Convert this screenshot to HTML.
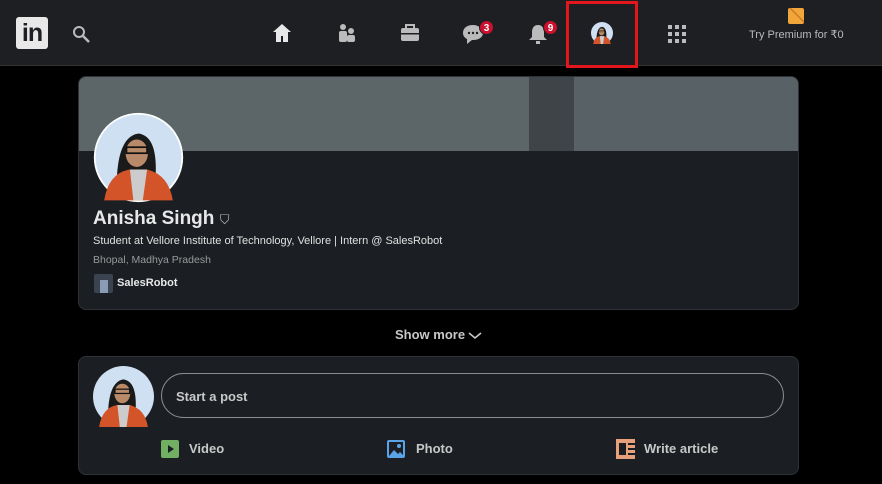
<!DOCTYPE html>
<html><head><style>
*{margin:0;padding:0;box-sizing:border-box}
body{width:882px;height:484px;background:#000;font-family:"Liberation Sans",sans-serif;position:relative;overflow:hidden;color:#e8e8e8}
.nav{position:absolute;left:0;top:0;width:882px;height:66px;background:#1d1f23;border-bottom:1px solid #333}
.ab{position:absolute}
.card{position:absolute;left:78px;background:#1b1f23;border-radius:8px;border:1px solid #2e3236;overflow:hidden}
.badge{position:absolute;background:#cb112d;color:#fff;font-size:10px;font-weight:bold;width:15px;height:15px;border-radius:50%;text-align:center;line-height:15px;border:1px solid #1d1f23}
</style></head><body>
<svg width="0" height="0" style="position:absolute"><defs>
<g id="av"><circle cx="50" cy="50" r="50" fill="#cfe0f2"/><path d="M25 70 Q28 25 50 22 Q72 25 70 70 Z" fill="#1a1a1a"/><ellipse cx="48" cy="45" rx="13" ry="16" fill="#b98a6a"/><rect x="36" y="38" width="24" height="7" fill="none" stroke="#111" stroke-width="2"/><path d="M10 100 Q15 68 40 64 L60 64 Q85 70 90 100 Z" fill="#d4542a"/><path d="M40 64 L60 64 L55 100 L44 100Z" fill="#ccc"/></g>
</defs></svg>
<div class="nav">
 <div class="ab" style="left:16px;top:17px;width:32px;height:32px;background:#e8e8e8;border-radius:3px;color:#1d1f23;font-weight:bold;font-size:25px;line-height:33px;text-align:center;letter-spacing:-1px">in</div>
 <svg class="ab" style="left:72px;top:25px" width="18" height="18"><circle cx="7" cy="7" r="5" fill="none" stroke="#bbb" stroke-width="2"/><path d="M11 11l6 6" stroke="#bbb" stroke-width="2.5"/></svg>
 <svg class="ab" style="left:272px;top:23px" width="20" height="20"><path d="M10 1L1 9h3v10h5v-6h2v6h5V9h3z" fill="#e8e8e8"/></svg>
 <svg class="ab" style="left:337px;top:23px" width="20" height="20"><circle cx="6" cy="4" r="3" fill="#bbb"/><rect x="2" y="8" width="8" height="11" rx="2" fill="#bbb"/><circle cx="14" cy="8" r="3" fill="#bbb"/><rect x="10" y="12" width="8" height="7" rx="2" fill="#bbb"/></svg>
 <svg class="ab" style="left:400px;top:23px" width="20" height="20"><rect x="6" y="2" width="8" height="4" fill="none" stroke="#bbb" stroke-width="2"/><rect x="1" y="5" width="18" height="13" rx="2" fill="#bbb"/><rect x="1" y="10" width="18" height="1.5" fill="#1d1f23"/></svg>
 <svg class="ab" style="left:462px;top:23px" width="22" height="22"><path d="M11 2C5 2 1 5 1 10c0 3 2 5 4 6v5l5-4h1c6 0 10-3 10-7s-4-8-10-8z" fill="#bbb"/><circle cx="7" cy="10" r="1.2" fill="#1d1f23"/><circle cx="11" cy="10" r="1.2" fill="#1d1f23"/><circle cx="15" cy="10" r="1.2" fill="#1d1f23"/></svg>
 <div class="badge" style="left:479px;top:20px">3</div>
 <svg class="ab" style="left:527px;top:23px" width="22" height="22"><path d="M11 2c-4 0-6 3-6 7v5l-3 3h18l-3-3V9c0-4-2-7-6-7z" fill="#bbb"/><rect x="9" y="18" width="4" height="3" fill="#bbb"/></svg>
 <div class="badge" style="left:543px;top:20px">9</div>
 <div class="ab" style="left:566px;top:1px;width:72px;height:67px;border:3px solid #e3161b"></div>
 <svg class="ab" style="left:591px;top:22px" width="22" height="22" viewBox="0 0 100 100"><use href="#av"/></svg>
 <svg class="ab" style="left:668px;top:25px" width="18" height="18"><g fill="#bbb"><rect x="0" y="0" width="4" height="4"/><rect x="7" y="0" width="4" height="4"/><rect x="14" y="0" width="4" height="4"/><rect x="0" y="7" width="4" height="4"/><rect x="7" y="7" width="4" height="4"/><rect x="14" y="7" width="4" height="4"/><rect x="0" y="14" width="4" height="4"/><rect x="7" y="14" width="4" height="4"/><rect x="14" y="14" width="4" height="4"/></g></svg>
 <svg class="ab" style="left:788px;top:8px" width="16" height="16"><rect width="16" height="16" rx="2" fill="#f1a63a"/><path d="M2 0L16 14" stroke="#c9782a" stroke-width="1.5"/></svg>
 <div class="ab" style="left:749px;top:28px;font-size:11px;color:#bbb">Try Premium for ₹0</div>
</div>

<div class="card" style="top:76px;width:721px;height:234px">
 <div class="ab" style="left:0;top:0;width:721px;height:74px;background:#5c6669"></div>
 <div class="ab" style="left:450px;top:0;width:45px;height:74px;background:#3e4448"></div>
 <div class="ab" style="left:495px;top:0;width:226px;height:74px;background:#586165"></div>
 <svg class="ab" style="left:14px;top:35px" width="91" height="91" viewBox="-3 -3 106 106"><circle cx="50" cy="50" r="52" fill="#fff"/><use href="#av"/></svg>
 <div class="ab" style="left:14px;top:131px;font-size:19px;font-weight:bold;color:#e8e8e8">Anisha Singh <span style="font-size:13px;font-weight:normal;color:#bbb">⛉</span></div>
 <div class="ab" style="left:14px;top:158px;font-size:11px;color:#e0e0e0">Student at Vellore Institute of Technology, Vellore | Intern @ SalesRobot</div>
 <div class="ab" style="left:14px;top:177px;font-size:10.5px;color:#999">Bhopal, Madhya Pradesh</div>
 <div class="ab" style="left:15px;top:197px;width:19px;height:19px;background:#3b4250;border-radius:2px"><div style="position:absolute;left:6px;top:6px;width:8px;height:13px;background:#8a9bb5"></div></div>
 <div class="ab" style="left:38px;top:200px;font-size:11px;font-weight:bold;color:#e8e8e8">SalesRobot</div>
</div>

<div class="ab" style="left:395px;top:327px;font-size:13px;font-weight:bold;color:#c8c8c8">Show more</div>
<svg class="ab" style="left:468px;top:330px" width="14" height="10"><path d="M1 3l6 5 6-5" fill="none" stroke="#c8c8c8" stroke-width="1.6"/></svg>

<div class="card" style="top:356px;width:721px;height:119px">
 <svg class="ab" style="left:14px;top:9px" width="61" height="61" viewBox="0 0 100 100"><use href="#av"/></svg>
 <div class="ab" style="left:82px;top:16px;width:623px;height:45px;border:1px solid #8a8d90;border-radius:23px"></div>
 <div class="ab" style="left:97px;top:32px;font-size:13px;font-weight:bold;color:#c8c8c8">Start a post</div>
 <svg class="ab" style="left:82px;top:83px" width="18" height="18"><rect width="18" height="18" rx="2" fill="#71b062"/><path d="M7 5l6 4-6 4z" fill="#1b1f23"/></svg>
 <div class="ab" style="left:110px;top:84px;font-size:13px;font-weight:bold;color:#c8c8c8">Video</div>
 <svg class="ab" style="left:308px;top:83px" width="18" height="18"><rect x="1" y="1" width="16" height="16" rx="1" fill="none" stroke="#5aa3e6" stroke-width="2"/><path d="M2 16l5-6 4 4 2-2 4 4z" fill="#5aa3e6"/><circle cx="12" cy="6" r="2" fill="#5aa3e6"/></svg>
 <div class="ab" style="left:337px;top:84px;font-size:13px;font-weight:bold;color:#c8c8c8">Photo</div>
 <svg class="ab" style="left:537px;top:82px" width="19" height="20"><rect width="19" height="20" fill="#e7a17a"/><rect x="3" y="4" width="7" height="12" fill="#1b1f23"/><g fill="#1b1f23"><rect x="12" y="4" width="7" height="2"/><rect x="12" y="9" width="7" height="2"/><rect x="12" y="14" width="7" height="2"/></g></svg>
 <div class="ab" style="left:565px;top:84px;font-size:13px;font-weight:bold;color:#c8c8c8">Write article</div>
</div>
</body></html>
